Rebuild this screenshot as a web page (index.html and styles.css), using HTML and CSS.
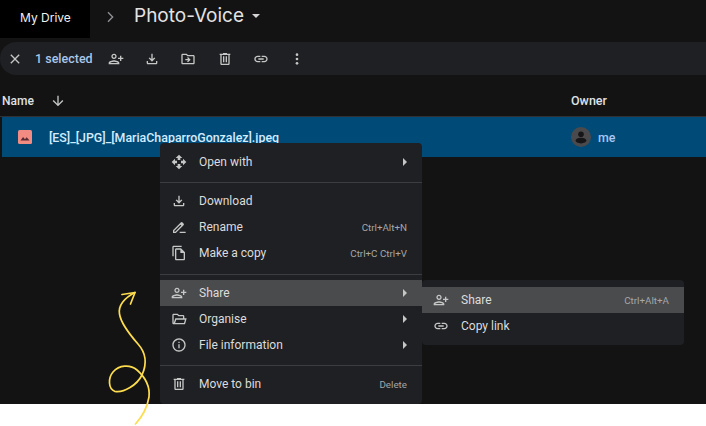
FILE: index.html
```html
<!DOCTYPE html>
<html lang="en">
<head>
    <meta charset="UTF-8">
    <meta name="viewport" content="width=device-width, initial-scale=1.0">
    <title>Photo-Voice - Google Drive</title>
    <link rel="stylesheet" href="styles.css">
</head>
<body>
    <svg class="sprites" width="0" height="0">
        <defs>
            <symbol id="i-share" viewBox="0 0 24 24"><path transform="matrix(-1 0 0 1 24 0)" d="M15 12c2.21 0 4-1.79 4-4s-1.79-4-4-4-4 1.79-4 4 1.79 4 4 4zm0-6c1.1 0 2 .9 2 2s-.9 2-2 2-2-.9-2-2 .9-2 2-2zm0 8c-2.67 0-8 1.34-8 4v2h16v-2c0-2.66-5.33-4-8-4zm-6 4c.22-.72 3.31-2 6-2 2.7 0 5.8 1.29 6 2H9zm-3-3v-3h3v-2H6V7H4v3H1v2h3v3h2z"/></symbol>
            <symbol id="i-download" viewBox="0 0 24 24"><path d="M18 15v3H6v-3H4v3c0 1.1.9 2 2 2h12c1.1 0 2-.9 2-2v-3h-2zm-1-4l-1.41-1.41L13 12.17V4h-2v8.17L8.41 9.59 7 11l5 5 5-5z"/></symbol>
            <symbol id="i-move" viewBox="0 0 24 24"><path d="M20 6h-8l-2-2H4c-1.1 0-2 .9-2 2v12c0 1.1.9 2 2 2h16c1.1 0 2-.9 2-2V8c0-1.1-.9-2-2-2zm0 12H4V6h5.17l2 2H20v10zm-8.01-9l-1.41 1.41L12.16 12H8v2h4.16l-1.59 1.59L11.99 17 16 13.01 11.99 9z"/></symbol>
            <symbol id="i-bin" viewBox="0 0 24 24"><path d="M15 4V3H9v1H4v2h1v13c0 1.1.9 2 2 2h10c1.1 0 2-.9 2-2V6h1V4h-5zm2 15H7V6h10v13zM9 8h2v9H9zm4 0h2v9h-2z"/></symbol>
            <symbol id="i-link" viewBox="0 0 24 24"><path d="M17 7h-4v2h4c1.65 0 3 1.35 3 3s-1.35 3-3 3h-4v2h4c2.76 0 5-2.24 5-5s-2.24-5-5-5zm-6 8H7c-1.65 0-3-1.35-3-3s1.35-3 3-3h4V7H7c-2.76 0-5 2.24-5 5s2.24 5 5 5h4v-2zm-3-4h8v2H8z"/></symbol>
            <symbol id="i-more" viewBox="0 0 24 24"><circle cx="12" cy="5.5" r="2"/><circle cx="12" cy="12" r="2"/><circle cx="12" cy="18.5" r="2"/></symbol>
            <symbol id="i-close" viewBox="0 0 24 24"><path d="M19 6.41L17.59 5 12 10.59 6.41 5 5 6.41 10.59 12 5 17.59 6.41 19 12 13.41 17.59 19 19 17.59 13.41 12z"/></symbol>
            <symbol id="i-sort" viewBox="0 0 24 24"><path d="M20 12l-1.41-1.41L13 16.17V4h-2v12.17l-5.58-5.59L4 12l8 8 8-8z"/></symbol>
            <symbol id="i-open" viewBox="0 0 24 24"><path d="M10 9h4V6h3l-5-5-5 5h3v3zm-1 1H6V7l-5 5 5 5v-3h3v-4zm14 2l-5-5v3h-3v4h3v3l5-5zm-9 3h-4v3H7l5 5 5-5h-3v-3z"/></symbol>
            <symbol id="i-rename" viewBox="0 0 24 24"><path d="M3 21v-4.2L14.6 5.2a2 2 0 0 1 2.8 0l1.4 1.4a2 2 0 0 1 0 2.8L7.2 21H3zm2-2h1.4L15.5 9.9l-1.4-1.4L5 17.6V19zm8 0h9v2h-9z"/></symbol>
            <symbol id="i-copy" viewBox="0 0 24 24"><path d="M16 1H4c-1.1 0-2 .9-2 2v14h2V3h12V1zm-1 4H8c-1.1 0-1.99.9-1.99 2L6 21c0 1.1.89 2 1.99 2H19c1.1 0 2-.9 2-2V11l-6-6zM8 21V7h6v5h5v9H8z"/></symbol>
            <symbol id="i-folder" viewBox="0 0 24 24"><path d="M20 6h-8l-2-2H4c-1.1 0-2 .9-2 2v12c0 1.1.9 2 2 2h15.5c.9 0 1.6-.6 1.9-1.4L23.5 11H20V8c0-1.1-.9-2-2-2h2zM4 6h5.2l2 2H18v3H6.5L4 18V6zm15.5 12H6.2l1.7-5h13l-1.4 5z"/></symbol>
            <symbol id="i-info" viewBox="0 0 24 24"><path d="M11 7h2v2h-2zm0 4h2v6h-2zm1-9C6.48 2 2 6.48 2 12s4.48 10 10 10 10-4.48 10-10S17.52 2 12 2zm0 18c-4.41 0-8-3.59-8-8s3.59-8 8-8 8 3.59 8 8-3.59 8-8 8z"/></symbol>
        </defs>
    </svg>

    <div class="screen">
        <header class="topbar">
            <div class="crumb-root">My Drive</div>
            <svg class="crumb-sep" viewBox="0 0 24 24"><path d="M9 5l7 7-7 7" fill="none" stroke="currentColor" stroke-width="2"/></svg>
            <div class="crumb-title">Photo-Voice</div>
            <span class="crumb-caret"></span>
        </header>

        <div class="toolbar">
            <svg class="ico close-ico"><use href="#i-close"/></svg>
            <span class="sel-count">1 selected</span>
            <div class="tool-btns">
                <span class="tool"><svg class="ico"><use href="#i-share"/></svg></span>
                <span class="tool"><svg class="ico"><use href="#i-download"/></svg></span>
                <span class="tool"><svg class="ico"><use href="#i-move"/></svg></span>
                <span class="tool"><svg class="ico"><use href="#i-bin"/></svg></span>
                <span class="tool"><svg class="ico"><use href="#i-link"/></svg></span>
                <span class="tool"><svg class="ico"><use href="#i-more"/></svg></span>
            </div>
        </div>

        <div class="list-head">
            <span class="col-name">Name</span>
            <svg class="ico sort-ico"><use href="#i-sort"/></svg>
            <span class="col-owner">Owner</span>
        </div>

        <div class="file-row">
            <svg class="file-ico" viewBox="0 0 14 14">
                <rect width="14" height="14" rx="1.5" fill="#f28b82"/>
                <path d="M2.5 10.5l2.6-3.4 1.9 2.2 1.6-2 3 3.2z" fill="#5a2b33"/>
            </svg>
            <span class="file-name">[ES]_[JPG]_[MariaChaparroGonzalez].jpeg</span>
            <span class="file-owner">
                <svg class="avatar" viewBox="0 0 20 20">
                    <circle cx="10" cy="10" r="10" fill="#4a4a4c"/>
                    <circle cx="10" cy="7.2" r="2.8" fill="#161618"/>
                    <ellipse cx="10" cy="13.6" rx="5.4" ry="2.8" fill="#161618"/>
                </svg>
                me
            </span>
        </div>

        <div class="menu main-menu">
            <div class="item"><svg class="ico"><use href="#i-open"/></svg><span class="label">Open with</span><span class="arrow"></span></div>
            <div class="sep"></div>
            <div class="item"><svg class="ico"><use href="#i-download"/></svg><span class="label">Download</span></div>
            <div class="item"><svg class="ico"><use href="#i-rename"/></svg><span class="label">Rename</span><span class="keys">Ctrl+Alt+N</span></div>
            <div class="item"><svg class="ico"><use href="#i-copy"/></svg><span class="label">Make a copy</span><span class="keys">Ctrl+C Ctrl+V</span></div>
            <div class="sep sep-wide"></div>
            <div class="item active"><svg class="ico"><use href="#i-share"/></svg><span class="label">Share</span><span class="arrow"></span></div>
            <div class="item"><svg class="ico"><use href="#i-folder"/></svg><span class="label">Organise</span><span class="arrow"></span></div>
            <div class="item"><svg class="ico"><use href="#i-info"/></svg><span class="label">File information</span><span class="arrow"></span></div>
            <div class="sep"></div>
            <div class="item"><svg class="ico"><use href="#i-bin"/></svg><span class="label">Move to bin</span><span class="keys">Delete</span></div>
        </div>

        <div class="menu sub-menu">
            <div class="item active"><svg class="ico"><use href="#i-share"/></svg><span class="label">Share</span><span class="keys">Ctrl+Alt+A</span></div>
            <div class="item"><svg class="ico"><use href="#i-link"/></svg><span class="label">Copy link</span></div>
        </div>
    </div>

    <div class="page-foot"></div>

    <svg class="scribble" viewBox="100 285 60 141">
        <path d="M135 292.5C124 298 118 306 119.5 314C121 324 131 336 138 344C146 353 147 364 142 375C137 385 124 393 115 391.5C108 389 108 378 113 372C119 365 130 364 137 370C146 378 150 388 149 397C147 409 142 417 135.5 424"/>
        <path d="M122 294.5L135 292.5L130.5 304"/>
    </svg>
</body>
</html>
```

FILE: styles.css
```css
* {
    box-sizing: border-box;
}

body {
    margin: 0;
    background-color: #fff;
    font-family: Roboto, "Liberation Sans", sans-serif;
    overflow: hidden;
}

.sprites {
    position: absolute;
}

.screen {
    position: relative;
    height: 404px;
    background-color: #131314;
    color: #e3e3e3;
    overflow: hidden;
}

.page-foot {
    height: 22px;
    background-color: #fff;
}

.ico {
    width: 16px;
    height: 16px;
    fill: #c4c7c5;
    flex: none;
}

/* top bar */
.topbar {
    display: flex;
    align-items: flex-start;
    height: 42px;
}

.crumb-root {
    width: 90px;
    height: 38px;
    padding: 10px 0 0 20px;
    background-color: #000;
    color: #f0f0f0;
    font-family: Inter, sans-serif;
    font-size: 12px;
    line-height: 16px;
}

.crumb-sep {
    width: 16px;
    height: 16px;
    margin: 9px 0 0 12px;
    color: #8f9194;
}

.crumb-title {
    margin: 2px 0 0 16px;
    font-family: Inter, sans-serif;
    font-size: 19px;
    line-height: 28px;
    color: #e3e3e3;
}

.crumb-caret {
    margin: 14px 0 0 8px;
    border-left: 4px solid transparent;
    border-right: 4px solid transparent;
    border-top: 4px solid #d5d5d5;
}

/* selection toolbar */
.toolbar {
    display: flex;
    align-items: center;
    height: 33px;
    padding-left: 7px;
    background-color: #1f2023;
    border-radius: 16px 0 0 16px;
}

.sel-count {
    width: 56px;
    margin-left: 12px;
    font-size: 12.5px;
    font-weight: 500;
    color: #a8c7e8;
    white-space: nowrap;
}

.tool-btns {
    display: flex;
    margin-left: 7px;
}

.tool {
    display: flex;
    justify-content: center;
    width: 36.2px;
}

/* list */
.list-head {
    display: flex;
    align-items: center;
    height: 42px;
    padding: 10px 0 0 2px;
    border-bottom: 1px solid #303134;
    font-size: 12px;
    font-weight: 500;
    color: #dfe1e5;
}

.col-name {
    width: 48px;
}

.sort-ico {
    width: 16px;
    height: 16px;
}

.col-owner {
    margin-left: 505px;
    font-size: 12.5px;
}

.file-row {
    display: flex;
    align-items: center;
    height: 40px;
    margin-left: 2px;
    padding-left: 16px;
    background-color: #004a77;
    font-size: 12.4px;
    font-weight: 500;
    color: #d3ecff;
}

.file-ico {
    width: 14px;
    height: 14px;
    flex: none;
}

.file-name {
    margin-left: 17px;
    width: 522px;
    white-space: nowrap;
}

.file-owner {
    display: flex;
    align-items: center;
    gap: 7px;
    color: #a8c7fa;
}

.avatar {
    width: 20px;
    height: 20px;
}

/* menus */
.menu {
    position: absolute;
    width: 262px;
    padding: 6px 0 7px;
    background-color: #1f2023;
    border-radius: 4px;
}

.main-menu {
    left: 160px;
    top: 143px;
}

.sub-menu {
    left: 422px;
    top: 280px;
    padding: 7px 0 6px;
}

.item {
    display: flex;
    align-items: center;
    height: 26px;
    padding: 0 15px 0 11px;
    font-size: 12px;
    color: #dcdcdc;
}

.item.active {
    background-color: #4a4b4d;
}

.label {
    flex: 1;
    margin-left: 12px;
}

.keys {
    font-size: 9.8px;
    color: #a5a6a8;
}

.arrow {
    border-top: 4px solid transparent;
    border-bottom: 4px solid transparent;
    border-left: 4px solid #c4c7c5;
}

.sep {
    height: 1px;
    margin: 7px 0 5px;
    background-color: #3c3d40;
}

.sep-wide {
    margin-top: 8px;
}

/* hand drawn arrow */
.scribble {
    position: absolute;
    left: 100px;
    top: 285px;
    width: 60px;
    height: 141px;
    fill: none;
    stroke: #fddc4e;
    stroke-width: 1.7;
    stroke-linecap: round;
    stroke-linejoin: round;
}
```
